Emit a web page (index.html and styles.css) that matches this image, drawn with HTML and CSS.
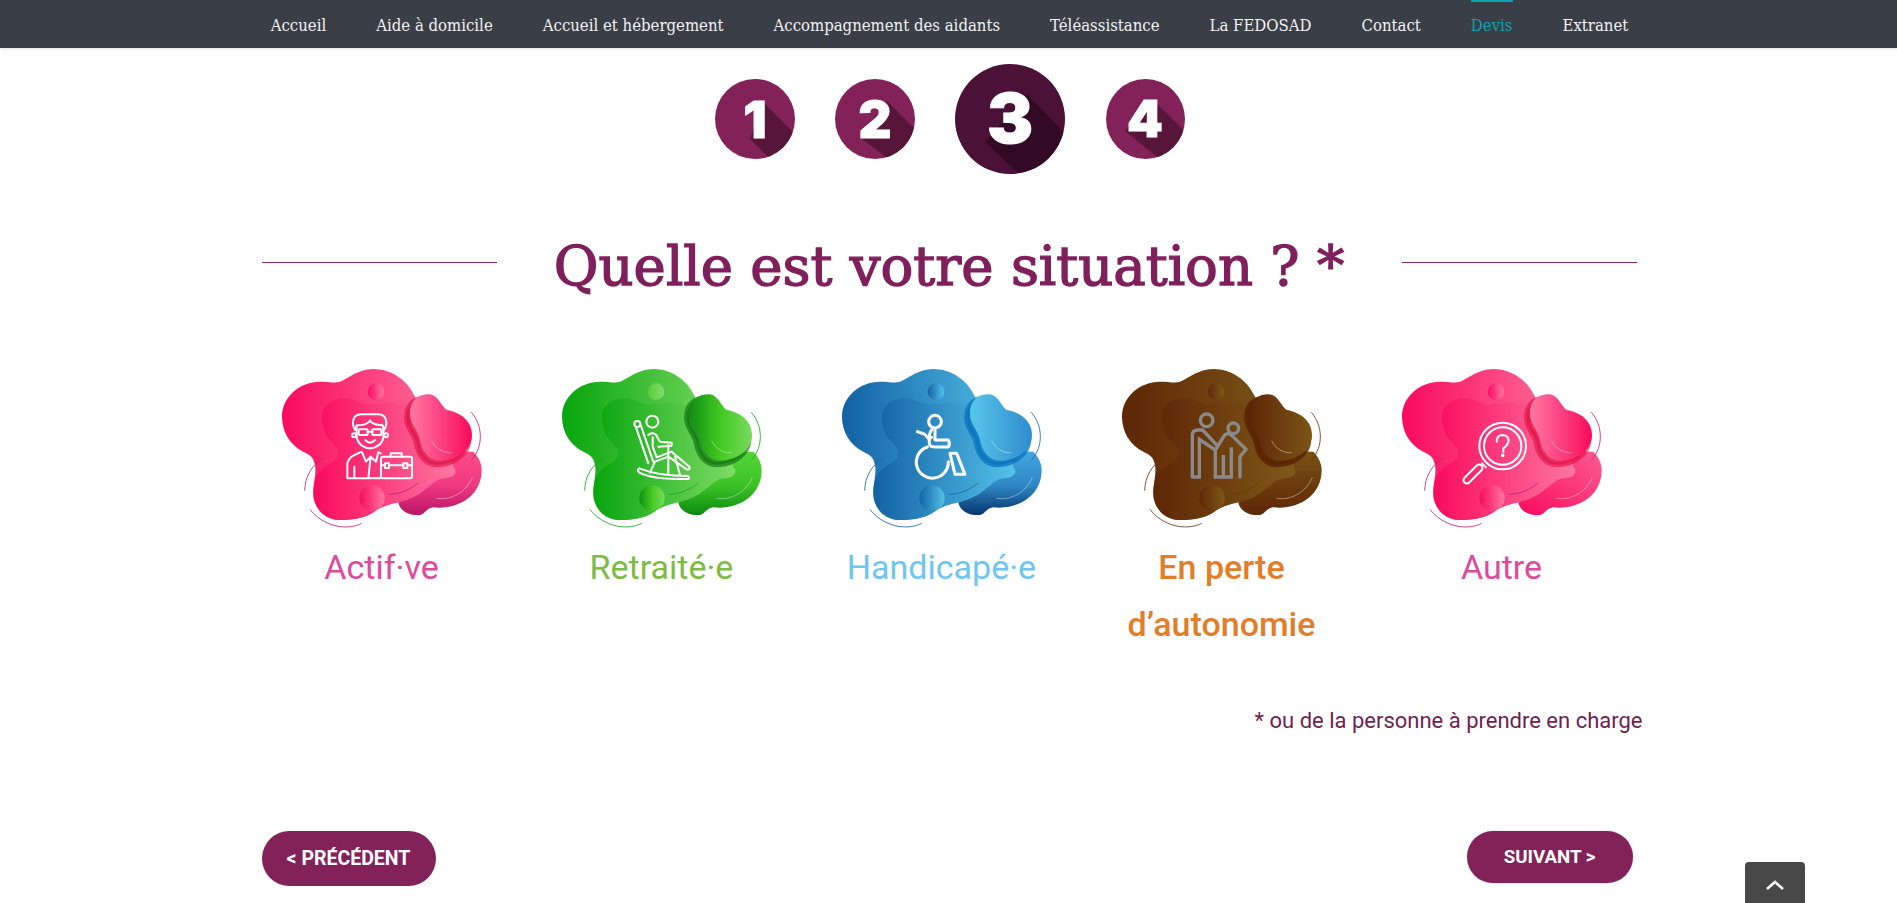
FILE: index.html
```html
<!doctype html>
<html lang="fr">
<head>
<meta charset="utf-8">
<title>Devis</title>
<link rel="stylesheet" href="styles.css">
</head>
<body>

<svg class="defs" width="0" height="0" aria-hidden="true">
  <defs>
    <linearGradient id="pink-main"><stop offset="0" stop-color="#f90a5c"/><stop offset="1" stop-color="#ff76a2"/></linearGradient>
    <linearGradient id="pink-back" x1="0" y1="0" x2="0" y2="1"><stop offset="0" stop-color="#ff4c88"/><stop offset=".55" stop-color="#f0387f"/><stop offset="1" stop-color="#b81468"/></linearGradient>
    <linearGradient id="pink-back2" x1="0" y1="1" x2="1" y2="0"><stop offset="0" stop-color="#f90a5c"/><stop offset="1" stop-color="#ff5c92"/></linearGradient>
    <linearGradient id="pink-front"><stop offset="0" stop-color="#ff78a4"/><stop offset="1" stop-color="#f90a5c"/></linearGradient>

    <linearGradient id="green-main"><stop offset="0" stop-color="#07a50d"/><stop offset="1" stop-color="#7fdc66"/></linearGradient>
    <linearGradient id="green-back" x1="0" y1="0" x2="0" y2="1"><stop offset="0" stop-color="#55d636"/><stop offset=".55" stop-color="#3cc226"/><stop offset="1" stop-color="#0b8a10"/></linearGradient>
    <linearGradient id="green-front"><stop offset="0" stop-color="#0f8f14"/><stop offset=".5" stop-color="#44ca22"/><stop offset="1" stop-color="#7ad95f"/></linearGradient>
    <linearGradient id="green-ball"><stop offset="0" stop-color="#55cf38"/><stop offset="1" stop-color="#84dc6c"/></linearGradient>

    <linearGradient id="blue-main"><stop offset="0" stop-color="#1261a4"/><stop offset="1" stop-color="#54c2e9"/></linearGradient>
    <linearGradient id="blue-back" x1="0" y1="0" x2="0" y2="1"><stop offset="0" stop-color="#43a7e0"/><stop offset=".55" stop-color="#2f86c4"/><stop offset="1" stop-color="#03346b"/></linearGradient>
    <linearGradient id="blue-front"><stop offset="0" stop-color="#58c6ea"/><stop offset="1" stop-color="#2f8ccd"/></linearGradient>

    <linearGradient id="brown-main"><stop offset="0" stop-color="#5e2606"/><stop offset="1" stop-color="#7f5918"/></linearGradient>
    <linearGradient id="brown-back" x1="0" y1="0" x2="0" y2="1"><stop offset="0" stop-color="#7a5215"/><stop offset="1" stop-color="#5e2606"/></linearGradient>
    <linearGradient id="brown-front"><stop offset="0" stop-color="#5e2606"/><stop offset="1" stop-color="#7c5516"/></linearGradient>

    <symbol id="blob" viewBox="-24 30 780 537">
      <path class="b-back" d="M415 460C425 490 455 497 480 495C495 492 498 475 520 472C590 480 665 440 665 360C665 340 655 320 640 305L500 300Z"/>
      <path class="b-main" d="M66 200C66 140 120 95 180 95C205 95 225 100 240 95C265 85 295 57 340 57C395 57 440 90 462 135C480 165 500 200 530 250C550 290 575 335 585 360C590 375 570 385 545 385C510 395 490 440 420 455C390 462 365 470 350 480C320 505 280 510 240 510C195 510 160 475 160 430C160 395 170 370 165 345C160 320 150 315 130 305C90 285 66 245 66 200Z"/>
      <path class="b-inner" d="M186 200C186 165 220 145 255 145C285 145 305 165 335 163C365 160 400 155 430 165C470 180 470 260 520 300C550 320 580 345 585 360C590 375 570 385 545 385C510 395 490 440 420 455C390 462 365 470 350 480C320 505 280 510 240 510C195 510 160 475 160 430C160 390 170 370 195 350C220 335 235 330 235 310C235 285 205 275 195 250C190 235 186 220 186 200Z"/>
      <path class="b-shade" transform="translate(-10 12)" d="M450 190C450 150 475 133 505 133C535 133 540 165 560 180C590 185 636 205 636 255C636 300 590 332 540 332C505 332 485 300 480 270C475 240 450 225 450 190Z"/>
      <path class="b-front" d="M450 190C450 150 475 133 505 133C535 133 540 165 560 180C590 185 636 205 636 255C636 300 590 332 540 332C505 332 485 300 480 270C475 240 450 225 450 190Z"/>
      <circle class="b-ball-top" cx="348" cy="125" r="25"/>
      <circle class="b-ball" cx="336" cy="444" r="38"/>
      <path class="b-arc" d="M634 187C668 225 672 290 634 330M190 325C155 345 135 380 134 422M150 478C185 525 255 545 305 520M388 433C420 432 450 420 475 398"/>
      <path class="b-light" d="M530 445C575 452 620 425 637 382M515 272C525 295 550 310 575 308"/>
    </symbol>
  </defs>
</svg>

<nav class="topbar">
  <a href="#">Accueil</a>
  <a href="#">Aide à domicile</a>
  <a href="#">Accueil et hébergement</a>
  <a href="#">Accompagnement des aidants</a>
  <a href="#">Téléassistance</a>
  <a href="#">La FEDOSAD</a>
  <a href="#">Contact</a>
  <a href="#" class="active">Devis</a>
  <a href="#">Extranet</a>
</nav>

<main class="page">
  <div class="steps">
    <svg class="step" width="80" height="80" viewBox="0 0 80 80">
      <polygon class="step-shadow" points="48,23 85,60 60,85 35,60"/>
      <text class="step-num" x="40" y="59">1</text>
    </svg>
    <svg class="step" width="80" height="80" viewBox="0 0 80 80">
      <polygon class="step-shadow" points="52,22 90,60 60,85 26,59"/>
      <text class="step-num" x="40" y="59">2</text>
    </svg>
    <svg class="step step-now" width="110" height="110" viewBox="0 0 110 110">
      <polygon class="step-shadow" points="72,30 120,80 75,120 30,78"/>
      <text class="step-num" x="55" y="79">3</text>
    </svg>
    <svg class="step step-last" width="79" height="80" viewBox="0 0 79 80">
      <polygon class="step-shadow" points="48,22 85,58 60,85 19,52"/>
      <text class="step-num" x="39" y="58">4</text>
    </svg>
  </div>

  <div class="heading">
    <span class="rule"></span>
    <h1>Quelle est votre situation ? *</h1>
    <span class="rule"></span>
  </div>

  <div class="choices">
    <a href="#" class="choice">
      <svg class="blob pink-a" width="260" height="179" viewBox="-24 30 780 537">
        <use href="#blob" x="-24" y="30" width="780" height="537"/>
        <g class="icon">
          <path d="M285 240C272 215 280 193 305 193H355C380 193 385 220 372 240M285 240L290 226C310 226 325 220 330 212C335 222 355 226 368 226L372 240"/>
          <path d="M290 232V262C295 285 315 295 330 295C350 295 368 280 370 262V232"/>
          <circle cx="282" cy="256" r="6"/><circle cx="378" cy="256" r="6"/>
          <rect x="296" y="238" width="27" height="17" rx="3"/><rect x="337" y="238" width="27" height="17" rx="3"/>
          <path d="M323 245H337M316 270Q330 286 345 270"/>
          <path d="M360 385H262V345C262 325 275 318 305 305L318 335L332 320L348 335L355 306L362 310M283 385V350M332 320L325 385"/>
          <rect x="363" y="320" width="93" height="65" rx="6"/>
          <path d="M392 320V310H425V320M363 346H375M387 346H430M442 346H456"/>
          <rect x="375" y="340" width="12" height="14"/><rect x="430" y="340" width="12" height="14"/>
        </g>
      </svg>
      <span class="choice-label label-pink">Actif·ve</span>
    </a>
    <a href="#" class="choice">
      <svg class="blob green" width="260" height="179" viewBox="-24 30 780 537">
        <use href="#blob" x="-24" y="30" width="780" height="537"/>
        <g class="icon">
          <circle cx="337" cy="215" r="18"/>
          <circle cx="292" cy="222" r="9"/>
          <path d="M288 232L325 340M302 225L340 335"/>
          <path d="M325 255C335 245 350 250 352 262L360 275L395 278Q398 290 385 288L355 290"/>
          <path d="M338 262V290L350 322L395 305L448 350Q452 360 440 358L385 320L345 335"/>
          <path d="M385 285V372M345 335L330 368M405 320L420 375"/>
          <path d="M298 355C340 372 400 378 445 378Q452 388 440 387C390 388 330 385 298 368Q290 360 298 355Z"/>
        </g>
      </svg>
      <span class="choice-label label-green">Retraité·e</span>
    </a>
    <a href="#" class="choice">
      <svg class="blob blue" width="260" height="179" viewBox="-24 30 780 537">
        <use href="#blob" x="-24" y="30" width="780" height="537"/>
        <g class="icon icon-thick">
          <circle cx="345" cy="215" r="19"/>
          <path d="M292 245L312 252C325 258 320 272 335 262"/>
          <path d="M335 240C325 250 328 270 328 280C330 290 335 291 345 291H385Q392 280 385 270H345V240"/>
          <path d="M322 291A48 48 0 1 0 385 335"/>
          <path d="M390 310H410L435 373H405Z"/>
        </g>
      </svg>
      <span class="choice-label label-blue">Handicapé·e</span>
    </a>
    <a href="#" class="choice">
      <svg class="blob brown" width="260" height="179" viewBox="-24 30 780 537">
        <use href="#blob" x="-24" y="30" width="780" height="537"/>
        <g class="icon icon-thick icon-grey">
          <circle cx="320" cy="211" r="19"/>
          <circle cx="400" cy="235" r="16"/>
          <path d="M277 385V255Q277 240 295 240H308L350 285"/>
          <path d="M277 381H298V268L346 300V381H370V315"/>
          <path d="M346 300L372 258Q380 246 395 256L438 298L420 320V385"/>
          <path d="M370 381H394V292"/>
        </g>
      </svg>
      <span class="choice-label label-orange">En perte d’autonomie</span>
    </a>
    <a href="#" class="choice">
      <svg class="blob pink-b" width="260" height="179" viewBox="-24 30 780 537">
        <use href="#blob" x="-24" y="30" width="780" height="537"/>
        <g class="icon">
          <circle cx="368" cy="288" r="70"/>
          <circle cx="368" cy="288" r="56"/>
          <path d="M350 275Q350 255 368 255Q388 256 385 276Q382 287 370 295V306"/>
          <circle cx="368" cy="316" r="2.5"/>
          <path d="M306 340L318 352"/>
          <rect x="-36" y="-10" width="72" height="20" rx="10" transform="translate(279 372) rotate(-45)"/>
        </g>
      </svg>
      <span class="choice-label label-pink">Autre</span>
    </a>
  </div>

  <p class="note">* ou de la personne à prendre en charge</p>

  <div class="actions">
    <a href="#" class="btn btn-prev">&lt; PRÉCÉDENT</a>
    <a href="#" class="btn btn-next">SUIVANT &gt;</a>
  </div>
</main>

<a href="#" class="to-top" aria-label="Haut de page">
  <svg width="18" height="10" viewBox="0 0 18 10"><path d="M1 9L9 2L17 9"/></svg>
</a>

</body>
</html>
```

FILE: styles.css
```css
html, body {
    margin: 0;
    padding: 0;
    overflow: hidden;
}
body {
    background: #fff;
    font-family: Roboto, sans-serif;
}
a {
    text-decoration: none;
    color: inherit;
}
.defs {
    display: block;
}

/* top menu */
.topbar {
    display: flex;
    justify-content: center;
    gap: 50px;
    height: 48px;
    padding-left: 2px;
    background: #3a3e47;
    box-shadow: 0 1px 3px rgba(0, 0, 0, 0.12);
    font-family: "DejaVu Serif Condensed", "DejaVu Serif", serif;
    font-size: 16.6px;
}
.topbar a {
    display: flex;
    align-items: center;
    height: 48px;
    box-sizing: border-box;
    border-top: 2px solid transparent;
    color: #f2f2f2;
}
.topbar a.active {
    border-top-color: #08a3b5;
    color: #08a3b5;
}

.page {
    width: 1375px;
    margin: 0 auto;
    padding-left: 1px;
}

/* step numbers */
.steps {
    display: flex;
    justify-content: center;
    align-items: center;
    gap: 40px;
    padding: 16px 0 0 2px;
}
.step {
    display: block;
    border-radius: 50%;
    background: #832159;
}
.step-last {
    margin-left: 1px;
}
.step-shadow {
    fill: #561539;
}
.step-num {
    fill: #fff;
    stroke: #fff;
    stroke-width: 1;
    font-family: Inter, sans-serif;
    font-weight: 900;
    font-size: 51px;
    text-anchor: middle;
}
.step-now {
    background: #4b1136;
}
.step-now .step-shadow {
    fill: #330a25;
}
.step-now .step-num {
    font-size: 69px;
}

/* title with the two lines */
.heading {
    display: flex;
    align-items: center;
    justify-content: space-between;
    height: 70px;
    margin-top: 55px;
}
.heading h1 {
    margin: 4px 0 0;
    color: #7f1f5b;
    font-family: "DejaVu Serif", serif;
    font-weight: 400;
    font-size: 54.5px;
    -webkit-text-stroke: 1.4px #7f1f5b;
}
.rule {
    width: 235px;
    height: 1px;
    margin-top: -4px;
    background: #8e2a68;
}

/* the five choices */
.choices {
    display: grid;
    grid-template-columns: repeat(5, 280px);
    width: 1400px;
    margin: 61px 0 0 -20px;
}
.choice {
    display: block;
    text-align: center;
}
.blob {
    display: block;
    margin: 0 auto;
}
.b-back { fill: var(--back); }
.b-main { fill: var(--main); }
.b-inner { fill: var(--inner); }
.b-shade { fill: var(--shade); stroke: var(--shade); stroke-width: 16; }
.b-front { fill: var(--front); }
.b-ball { fill: var(--ball); }
.b-ball-top { fill: var(--ball-top); }
.b-arc, .b-light {
    fill: none;
    stroke-width: 2.5;
}
.b-arc { stroke: var(--arc); }
.b-light { stroke: rgba(255, 255, 255, 0.5); }

.pink-a, .pink-b {
    --main: url(#pink-main);
    --inner: url(#pink-main);
    --back: url(#pink-back);
    --front: url(#pink-front);
    --ball: url(#pink-main);
    --ball-top: url(#pink-main);
    --shade: rgba(225, 20, 70, 0.65);
    --arc: #bd2077;
}
.pink-b {
    --back: url(#pink-back2);
}
.green {
    --main: url(#green-main);
    --inner: url(#green-main);
    --back: url(#green-back);
    --front: url(#green-front);
    --ball: url(#green-front);
    --ball-top: url(#green-ball);
    --shade: rgba(20, 120, 20, 0.7);
    --arc: #18a51c;
}
.blue {
    --main: url(#blue-main);
    --inner: url(#blue-main);
    --back: url(#blue-back);
    --front: url(#blue-front);
    --ball: url(#blue-main);
    --ball-top: url(#blue-main);
    --shade: rgba(10, 115, 190, 0.75);
    --arc: #1a64a6;
}
.brown {
    --main: url(#brown-main);
    --inner: url(#brown-main);
    --back: url(#brown-back);
    --front: url(#brown-front);
    --ball: url(#brown-main);
    --ball-top: url(#brown-main);
    --shade: rgba(90, 35, 5, 0.85);
    --arc: #6b3413;
}
.icon {
    fill: none;
    stroke: #fff;
    stroke-width: 6;
    stroke-linejoin: round;
    stroke-linecap: round;
}
.icon-thick {
    stroke-width: 9;
}
.icon-grey {
    stroke: #8a8a8a;
    stroke-width: 10;
    stroke-linecap: butt;
    stroke-linejoin: miter;
}

.choice-label {
    display: block;
    padding: 0 40px;
    font-size: 34px;
    font-weight: 400;
    line-height: 57px;
}
.label-pink { color: #de4a9c; }
.label-green { color: #7dbb42; }
.label-blue { color: #6ec6f0; }
.label-orange {
    color: #e27d28;
    font-weight: 500;
}

.note {
    margin: 53px -6px 0 0;
    color: #6f1f50;
    font-size: 22px;
    line-height: 30px;
    text-align: right;
}

/* previous / next */
.actions {
    display: flex;
    justify-content: space-between;
    align-items: flex-start;
    margin-top: 95px;
    padding-right: 4px;
}
.btn {
    display: flex;
    align-items: center;
    justify-content: center;
    border-radius: 28px;
    background: #832159;
    color: #fff;
    font-weight: 700;
}
.btn-prev {
    width: 174px;
    height: 55px;
    font-size: 19.5px;
}
.btn-next {
    width: 166px;
    height: 52px;
    font-size: 18.7px;
    box-shadow: 0 0 2px rgba(0, 0, 0, 0.25);
}

.to-top {
    position: fixed;
    right: 92px;
    bottom: 0;
    display: flex;
    justify-content: center;
    padding-top: 18px;
    box-sizing: border-box;
    width: 60px;
    height: 41px;
    border-radius: 4px 4px 0 0;
    background: #484848;
}
.to-top svg {
    display: block;
}
.to-top path {
    fill: none;
    stroke: #fff;
    stroke-width: 2.5;
}
```
